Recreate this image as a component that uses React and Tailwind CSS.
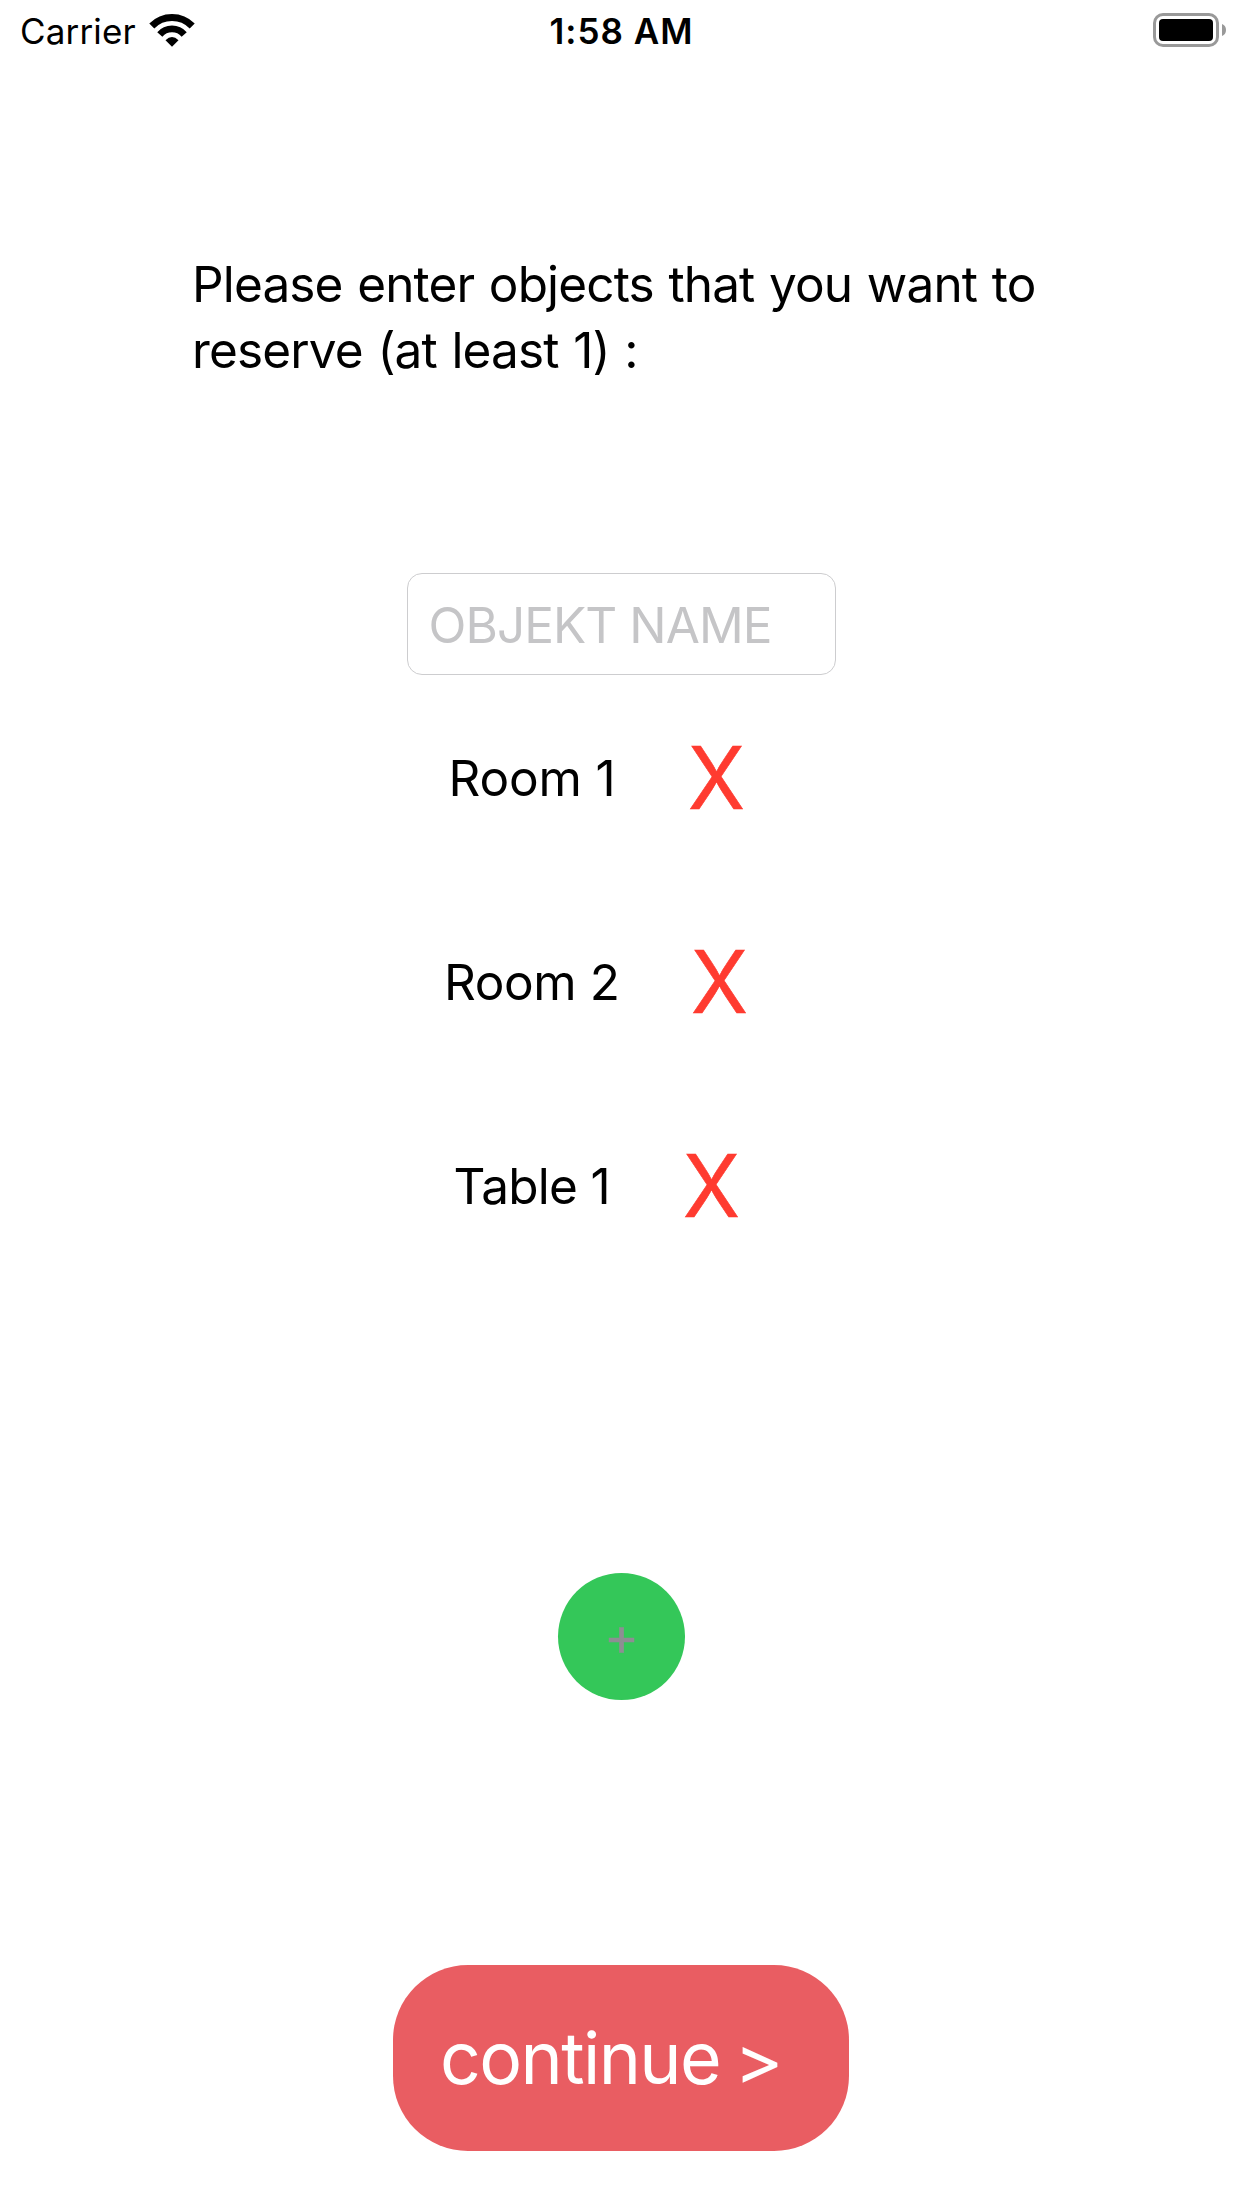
const objects = [
  { name: "Room 1", row: "pl-[448.5px]", label: "w-[239px] tracking-[-0.14px]" },
  { name: "Room 2", row: "pl-[444px]", label: "w-[246.5px] tracking-[-0.4px]" },
  { name: "Table 1", row: "pl-[453.5px]", label: "w-[229px] tracking-[-0.7px]" },
];

function WifiIcon() {
  return (
    <svg className="ml-[12px] h-[34px] w-[48px] shrink-0 -translate-y-px" viewBox="148 12 48 34" fill="none">
      <path d="M151.8 25A28.2 28.2 0 0 1 192.2 25" stroke="#000" strokeWidth="7" />
      <path d="M159.8 33.4A16.2 16.2 0 0 1 184.2 33.4" stroke="#000" strokeWidth="6.8" />
      <path d="M165.5 39.2Q172 32.6 178.5 39.2L172 45.8Z" fill="#000" />
    </svg>
  );
}

function BatteryIcon() {
  return (
    <svg className="h-[34px] w-[73px] -translate-y-px" viewBox="0 0 73 34" fill="none">
      <rect x="1.5" y="1.5" width="63" height="31" rx="8.5" stroke="#999" strokeWidth="3" />
      <rect x="6" y="6" width="54" height="22" rx="4" fill="#000" />
      <path d="M69 11C71.6 12 73 14.3 73 17S71.6 22 69 23Z" fill="#999" />
    </svg>
  );
}

function StatusBar() {
  return (
    <header className="grid h-[62px] grid-cols-3 items-center pl-[20px] pr-[16px] text-[35px] leading-none">
      <div className="flex items-center">
        <span className="tracking-[0.15px]">Carrier</span>
        <WifiIcon />
      </div>
      <div className="pr-[3px] text-center font-[580] tracking-[1px]">1:58 AM</div>
      <div className="flex justify-end">
        <BatteryIcon />
      </div>
    </header>
  );
}

export default function App() {
  return (
    <div className="flex h-[2208px] w-[1242px] flex-col overflow-hidden bg-white font-['Inter',sans-serif] text-[49.5px] font-[415] text-black">
      <StatusBar />
      <h1 className="ml-[192px] mt-[189px] w-[900px] font-[415] leading-[66px] tracking-[-0.85px] [word-spacing:1.5px]">
        Please enter objects that you want to
        <br />
        reserve (at least 1) :
      </h1>
      <input
        placeholder="OBJEKT NAME"
        className="ml-[407px] mt-[190px] h-[102px] w-[429px] rounded-[15px] border border-[#cdcdcf] bg-white pl-[20.5px] pt-[2px] tracking-[-0.93px] outline-none placeholder:text-[#c5c5c7]"
      />
      <ul className="mt-[2px]">
        {objects.map((o) => (
          <li key={o.name} className={`flex h-[204px] items-center leading-none ${o.row}`}>
            <span className={`whitespace-nowrap ${o.label}`}>{o.name}</span>
            <button className="origin-left scale-x-[0.96] pb-[3px] text-[87px] leading-none text-[#ff3b30] [-webkit-text-stroke:0.6px_#ff3b30]">
              X
            </button>
          </li>
        ))}
      </ul>
      <button className="ml-[558px] mt-[284px] flex h-[127px] w-[127px] items-center justify-center rounded-full bg-[#34c759] text-[53px] leading-none text-[#8e8e93] [-webkit-text-stroke:0.4px_#8e8e93]">
        +
      </button>
      <button className="ml-[393px] mt-[265px] flex h-[186px] w-[456px] items-center rounded-[75px] bg-[#e95d62] pl-[47px] pt-[2px] text-[71.5px] leading-none tracking-[-1.6px] text-white">
        <span>continue</span>
        <span className="ml-[14px] origin-left translate-y-[1px] scale-x-105 scale-y-95">&gt;</span>
      </button>
    </div>
  );
}
